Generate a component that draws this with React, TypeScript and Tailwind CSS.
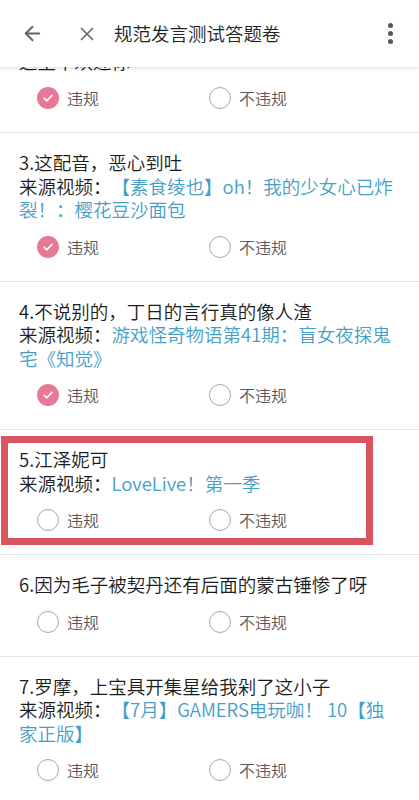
import { ArrowLeft, X } from "lucide-react";

type Item = {
  id: number;
  title: string;
  source?: string;
  answer: "yes" | "no" | null;
  marked?: boolean;
};

const ITEMS: Item[] = [
  { id: 2, title: "2.你也配看这部番？赶紧滚吧\n这里不欢迎你", answer: "yes" },
  { id: 3, title: "3.这配音，恶心到吐", source: "【素食绫也】oh！我的少女心已炸裂！：樱花豆沙面包", answer: "yes" },
  { id: 4, title: "4.不说别的，丁日的言行真的像人渣", source: "游戏怪奇物语第41期：盲女夜探鬼宅《知觉》", answer: "yes" },
  { id: 5, title: "5.江泽妮可", source: "LoveLive！第一季", answer: null, marked: true },
  { id: 6, title: "6.因为毛子被契丹还有后面的蒙古锤惨了呀", answer: null },
  { id: 7, title: "7.罗摩，上宝具开集星给我剁了这小子", source: "【7月】GAMERS电玩咖！ 10【独家正版】", answer: null },
];

function Radio({ checked, label }: { checked: boolean; label: string }) {
  return (
    <div className="flex w-[172px] items-center">
      {checked ? (
        <span className="flex h-[22px] w-[22px] items-center justify-center rounded-full bg-[#e97896]">
          <svg width="12" height="12" viewBox="0 0 12 12" fill="none">
            <path d="M2 6.2 L4.9 8.8 L10 3.4" stroke="white" strokeWidth="1.6" strokeLinecap="round" strokeLinejoin="round" />
          </svg>
        </span>
      ) : (
        <span className="h-[22px] w-[22px] rounded-full border-[1.5px] border-[#a8a8a8]" />
      )}
      <span className="ml-[8px] text-[16px] font-[350] leading-[24px] text-[#5a5a5a]">{label}</span>
    </div>
  );
}

function Question({ item, first }: { item: Item; first?: boolean }) {
  return (
    <div className={`relative border-b border-[#e6e6e6] bg-white px-[19px] pb-[22px] ${first ? "pt-[26px]" : "pt-[18px]"}`}>
      <div className="whitespace-pre-line text-[18.5px] font-[350] leading-[23.5px] text-[#1c1c1c] [text-spacing-trim:space-all]">
        {item.title}
        {item.source && (
          <>
            {"\n"}来源视频：<span className="text-[#449ec6]">{item.source}</span>
          </>
        )}
      </div>
      <div className="mt-[13px] ml-[18px] flex">
        <Radio checked={item.answer === "yes"} label="违规" />
        <Radio checked={item.answer === "no"} label="不违规" />
      </div>
      {item.marked && (
        <div className="pointer-events-none absolute left-[1px] top-[6px] h-[109px] w-[372px] border-[7px] border-[#d9545e]" />
      )}
    </div>
  );
}

export default function App() {
  return (
    <div
      className="relative h-[800px] w-[419px] overflow-hidden bg-white"
      style={{ fontFamily: '"Noto Sans CJK SC", sans-serif' }}
    >
      <div className="absolute inset-x-0 top-0 z-10 flex h-[67px] items-center bg-white shadow-[0_1px_4px_rgba(0,0,0,0.15)]">
        <ArrowLeft className="ml-[21px] text-[#666]" size={23} strokeWidth={2} />
        <X className="ml-[32px] text-[#666]" size={22} strokeWidth={1.8} />
        <span className="ml-[16px] text-[18.5px] font-[350] text-[#222]">规范发言测试答题卷</span>
        <div className="ml-auto mr-[26px] flex flex-col items-center gap-[3px]">
          <span className="h-[5px] w-[5px] rounded-full bg-[#555]" />
          <span className="h-[5px] w-[5px] rounded-full bg-[#555]" />
          <span className="h-[5px] w-[5px] rounded-full bg-[#555]" />
        </div>
      </div>
      <div className="flex flex-col">
        {ITEMS.map((item, i) => (
          <Question key={item.id} item={item} first={i === 0} />
        ))}
      </div>
    </div>
  );
}
